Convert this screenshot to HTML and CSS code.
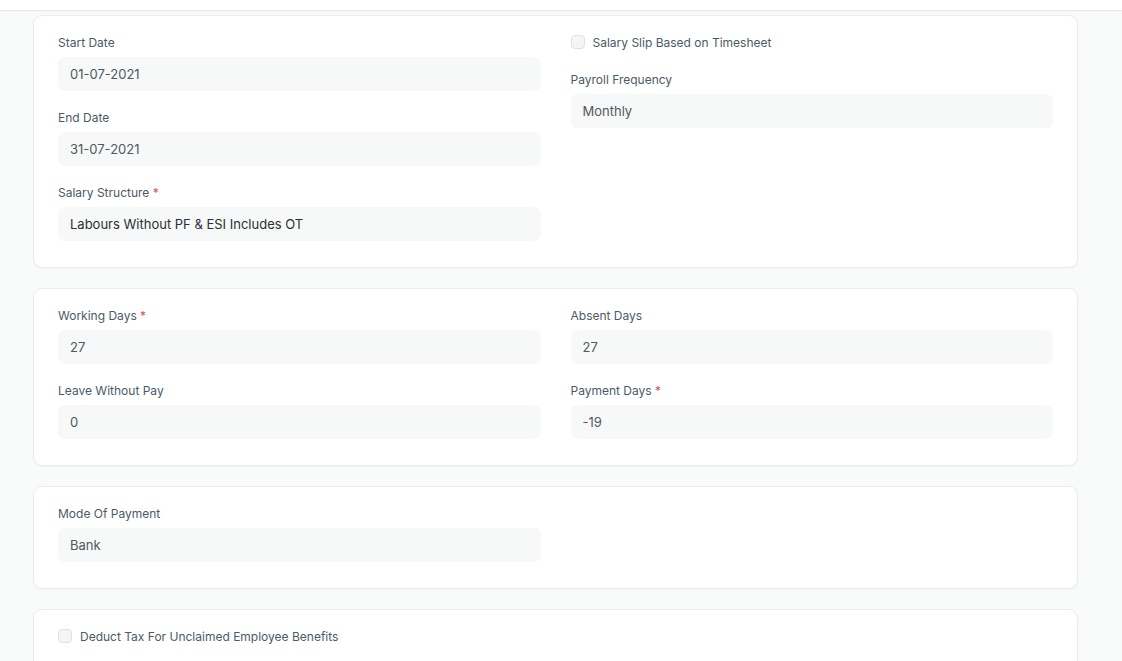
FILE: index.html
```html
<!DOCTYPE html>
<html>
<head>
<meta charset="utf-8">
<link rel="stylesheet" href="styles.css">
</head>
<body>
<div class="topbar"></div>
<main class="page">
  <section class="card">
    <div class="grid">
      <div class="col">
        <div class="field">
          <div class="label">Start Date</div>
          <div class="input">01-07-2021</div>
        </div>
        <div class="field">
          <div class="label">End Date</div>
          <div class="input">31-07-2021</div>
        </div>
        <div class="field">
          <div class="label">Salary Structure <span class="req">*</span></div>
          <div class="input dark">Labours Without PF &amp; ESI Includes OT</div>
        </div>
      </div>
      <div class="col">
        <div class="field check">
          <span class="box"></span><span class="check-label">Salary Slip Based on Timesheet</span>
        </div>
        <div class="field">
          <div class="label">Payroll Frequency</div>
          <div class="input">Monthly</div>
        </div>
      </div>
    </div>
  </section>

  <section class="card">
    <div class="grid">
      <div class="col">
        <div class="field">
          <div class="label">Working Days <span class="req">*</span></div>
          <div class="input">27</div>
        </div>
        <div class="field">
          <div class="label">Leave Without Pay</div>
          <div class="input">0</div>
        </div>
      </div>
      <div class="col">
        <div class="field">
          <div class="label">Absent Days</div>
          <div class="input">27</div>
        </div>
        <div class="field">
          <div class="label">Payment Days <span class="req">*</span></div>
          <div class="input">-19</div>
        </div>
      </div>
    </div>
  </section>

  <section class="card">
    <div class="grid">
      <div class="col">
        <div class="field">
          <div class="label">Mode Of Payment</div>
          <div class="input">Bank</div>
        </div>
      </div>
      <div class="col"></div>
    </div>
  </section>

  <section class="card">
    <div class="grid">
      <div class="col">
        <div class="field check">
          <span class="box"></span><span class="check-label">Deduct Tax For Unclaimed Employee Benefits</span>
        </div>
      </div>
      <div class="col"></div>
    </div>
  </section>
</main>
</body>
</html>
```

FILE: styles.css
```css
html, body {
  margin: 0;
  padding: 0;
  background: #f9fafa;
  font-family: Inter, "Noto Sans", sans-serif;
  color: #1f272e;
}
body {
  height: 661px;
  overflow: hidden;
}
.topbar {
  height: 10px;
  background: #ffffff;
  border-bottom: 1px solid #e8eaec;
  box-shadow: 0 1px 2px rgba(0,0,0,0.03);
}
.page {
  padding: 4px 44px 0 33px;
  display: flex;
  flex-direction: column;
  gap: 20px;
}
.card {
  background: #ffffff;
  border: 1px solid #e9ecee;
  border-radius: 9px;
  box-shadow: 0 1px 2px rgba(0,0,0,0.03);
  padding: 19px 24px 7px 24px;
}
.grid {
  display: grid;
  grid-template-columns: 1fr 1fr;
  column-gap: 30px;
}
.field {
  margin-bottom: 19px;
}
.label {
  font-size: 12px;
  line-height: 16px;
  height: 16px;
  color: #4c5a67;
  margin-bottom: 6px;
}
.req {
  color: #e24c4c;
}
.input {
  height: 34px;
  line-height: 34px;
  background: #f7f8f8;
  border-radius: 7px;
  padding: 0 12px;
  font-size: 13px;
  color: #4f5961;
}
.input.dark {
  color: #2a3036;
}
.field.check {
  display: flex;
  align-items: center;
  height: 14px;
  margin-bottom: 23px;
}
.box {
  width: 12px;
  height: 12px;
  border: 1px solid #dfe2e5;
  border-radius: 4px;
  background: #f4f5f6;
  margin-right: 8px;
  flex: none;
}
.check-label {
  font-size: 12px;
  color: #4c5a67;
}
```
